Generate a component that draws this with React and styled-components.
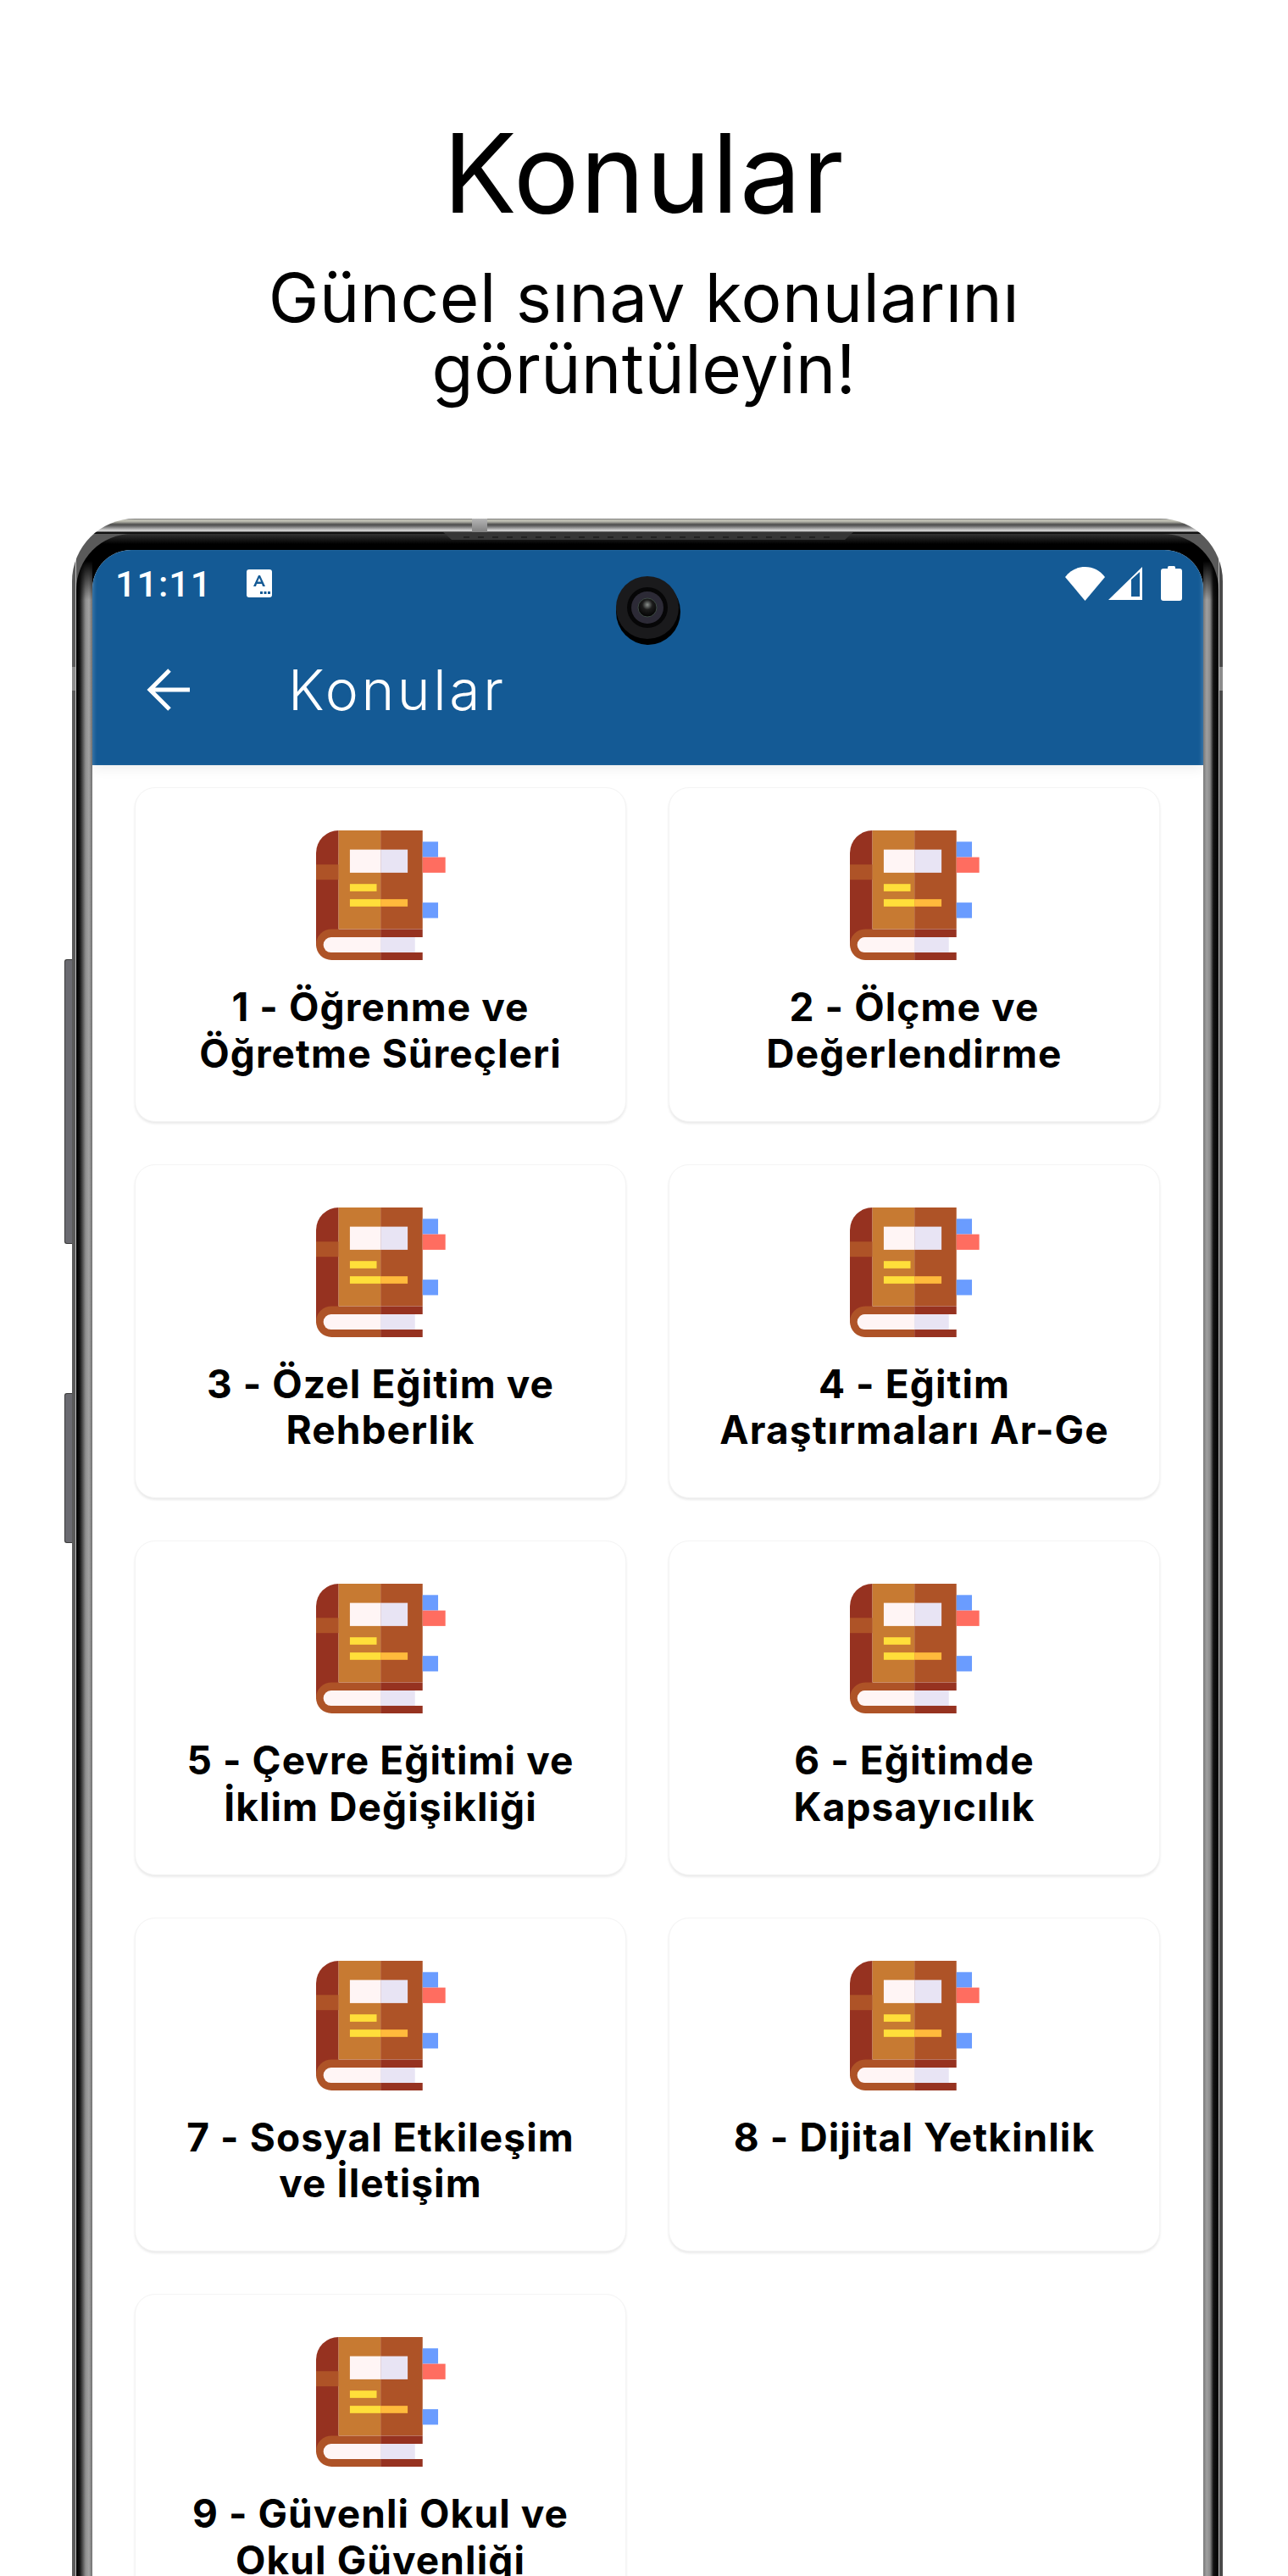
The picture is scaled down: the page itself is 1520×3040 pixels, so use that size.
import React from 'react';
import styled, { createGlobalStyle } from 'styled-components';

const sans = `Inter, "Noto Sans", "Liberation Sans", sans-serif`;

const GlobalStyle = createGlobalStyle`
    html, body { margin: 0; padding: 0; background: #fff; }
    #root { height: 3040px; overflow: hidden; }
`;

const Page = styled.div`
    height: 3040px;
    overflow: hidden;
    background: #fff;
    font-family: ${sans};
    color: #000;
`;

const Hero = styled.header`
    height: 612px;
    padding-top: 134px;
    box-sizing: border-box;
    text-align: center;
`;

const HeroTitle = styled.h1`
    margin: 0;
    font-size: 129px;
    line-height: 140px;
    font-weight: 400;
    letter-spacing: 1.5px;
`;

const HeroSub = styled.p`
    margin: 35px 0 0;
    font-size: 80px;
    line-height: 84px;
    font-weight: 400;
    letter-spacing: 0.5px;
`;

const Phone = styled.div`
    position: relative;
    width: 1358px;
    margin-left: 85px;
    box-sizing: border-box;
    padding: 18px 5px 0;
    border-radius: 74px 74px 0 0;
    background:
        linear-gradient(180deg, #777 0, #c9c9bb 2px, #a9a99f 4px, #4c4c4c 7px, #6a6a6a 9px, #d6d6d6 14px, #c4c4c4 15px, #111 16px, #111 18px) 0 0 / 100% 18px no-repeat,
        linear-gradient(90deg, #5a5a5a 0, #5a5a5a 3.5px, #c0c0c0 4px, #c0c0c0 5px, #5a5a5a 5px, #5a5a5a calc(100% - 5px), #c0c0c0 calc(100% - 5px), #c0c0c0 calc(100% - 4px), #4a4a4a calc(100% - 3.5px));
`;

const SideKey = styled.span`
    position: absolute;
    left: -9px;
    top: ${p => p.$top}px;
    width: 9px;
    height: ${p => p.$height}px;
    box-sizing: border-box;
    border: 1px solid #3a3a3a;
    border-right: 0;
    border-radius: 3px 0 0 3px;
    background: #6a6a70;
`;

const RimNotch = styled.span`
    position: absolute;
    ${p => p.$side}: 0;
    top: 175px;
    width: 4px;
    height: 28px;
    background: #8c8c8c;
`;

const TopKey = styled.span`
    position: absolute;
    left: 472px;
    top: 0;
    width: 18px;
    height: 17px;
    background: linear-gradient(180deg, #b5b5b5, #7d7d7d);
`;

const Speaker = styled.svg`
    position: absolute;
    left: 438px;
    top: 16px;
    display: block;
`;

const Bezel = styled.div`
    padding: 19px 18px 0 19px;
    border-radius: 66px 66px 0 0;
    background:
        linear-gradient(180deg, #333 0, #000 12px, #000 32px, rgba(0, 0, 0, 0) 78px) 0 0 / 100% 100% no-repeat,
        linear-gradient(90deg, #000 0, #111 4px, #8e8e8e 11px, #a2a2a2 15px, #6f6f6f 19px) 0 0 / 19px 100% no-repeat,
        linear-gradient(270deg, #000 0, #111 6px, #8a8a8a 10px, #a0a0a0 14px, #777 18px) 100% 0 / 18px 100% no-repeat,
        #000;
`;

const Screen = styled.div`
    position: relative;
    border-radius: 46px 46px 0 0;
    overflow: hidden;
    background: #fff;
`;

const AppHeader = styled.div`
    position: relative;
    z-index: 1;
    height: 254px;
    background: #145a95;
    color: #fff;
    box-shadow: 0 4px 14px rgba(0, 0, 0, 0.07), inset 4px 0 4px -2px rgba(255, 255, 255, 0.18), inset -4px 0 4px -2px rgba(255, 255, 255, 0.18);
`;

const StatusBar = styled.div`
    display: flex;
    align-items: center;
    height: 79px;
    padding: 0 25px 0 27px;
    box-sizing: border-box;
`;

const Clock = styled.span`
    font-family: Roboto, ${sans};
    font-size: 43px;
    font-weight: 500;
    letter-spacing: 1px;
    width: 155px;
`;

const StatusIcons = styled.div`
    display: flex;
    align-items: center;
    margin-left: auto;
`;

const Svg = styled.svg`
    display: block;
    flex: none;
    margin-left: ${p => p.$gap || 0}px;
`;

const TitleBar = styled.div`
    display: flex;
    align-items: center;
    height: 172px;
    padding-left: 64px;
`;

const BarTitle = styled.span`
    margin-left: 115px;
    font-size: 66px;
    font-weight: 300;
    letter-spacing: 3.6px;
`;

const Camera = styled.svg`
    position: absolute;
    z-index: 2;
    left: 614px;
    top: 29px;
`;

const TopicGrid = styled.div`
    display: grid;
    grid-template-columns: 580px 580px;
    grid-auto-rows: 394.5px;
    gap: 50px;
    padding: 26px 50px 0;
`;

const TopicCard = styled.div`
    box-sizing: border-box;
    padding-top: 50px;
    border-radius: 24px;
    background: #fff;
    border: 1px solid #f4f4f4;
    box-shadow: 0 2px 3px rgba(0, 0, 0, 0.09);
    text-align: center;
`;

const BookIcon = styled.svg`
    display: block;
    width: 153px;
    height: 153px;
    margin: 0 auto;
`;

const TopicName = styled.div`
    margin-top: 28px;
    font-size: 46px;
    line-height: 54.5px;
    font-weight: 700;
    letter-spacing: 1.1px;
    color: #000;
`;

const Book = () => (
    <BookIcon viewBox="97 60 460 460">
        <path d="M177 60H177A80 80 0 0 0 97 140V470L177 430Z" fill="#963220" />
        <rect x="97" y="181" width="80" height="54" fill="#ae5327" />
        <rect x="177" y="60" width="149" height="350" fill="#c77a32" />
        <rect x="326" y="60" width="149" height="350" fill="#ae5327" />
        <rect x="217" y="128" width="109" height="82" fill="#fff5f5" />
        <rect x="326" y="128" width="96" height="82" fill="#e8e4f4" />
        <rect x="217" y="250" width="95" height="26" fill="#ffdf3a" />
        <rect x="217" y="304" width="109" height="26" fill="#ffdf3a" />
        <rect x="326" y="304" width="96" height="26" fill="#ffba3c" />
        <rect x="475" y="100" width="55" height="55" fill="#6a9cff" />
        <rect x="475" y="155" width="81" height="55" fill="#ff6d60" />
        <rect x="475" y="316" width="55" height="55" fill="#6a9cff" />
        <path d="M326 410H152A55 55 0 0 0 97 465A55 55 0 0 0 152 520H326Z" fill="#ae5327" />
        <path d="M326 410H475V439H326ZM326 493H475V520H326Z" fill="#963220" />
        <path d="M326 439H150A27 27 0 0 0 150 493H326Z" fill="#fff5f5" />
        <rect x="326" y="439" width="122" height="54" fill="#e8e4f4" />
    </BookIcon>
);

const TOPICS = [
    ['1 - Öğrenme ve', 'Öğretme Süreçleri'],
    ['2 - Ölçme ve', 'Değerlendirme'],
    ['3 - Özel Eğitim ve', 'Rehberlik'],
    ['4 - Eğitim', 'Araştırmaları Ar-Ge'],
    ['5 - Çevre Eğitimi ve', 'İklim Değişikliği'],
    ['6 - Eğitimde', 'Kapsayıcılık'],
    ['7 - Sosyal Etkileşim', 've İletişim'],
    ['8 - Dijital Yetkinlik'],
    ['9 - Güvenli Okul ve', 'Okul Güvenliği'],
];

export default function App() {
    return (
        <Page>
            <GlobalStyle />
            <Hero>
                <HeroTitle>Konular</HeroTitle>
                <HeroSub>Güncel sınav konularını<br />görüntüleyin!</HeroSub>
            </Hero>
            <Phone>
                <SideKey $top={520} $height={336} />
                <SideKey $top={1032} $height={177} />
                <RimNotch $side="left" />
                <RimNotch $side="right" />
                <TopKey />
                <Speaker width="484" height="10" viewBox="0 0 484 10">
                    <path d="M0 0H484L474 9H10Z" fill="#363636" />
                    <path d="M24 6H460" stroke="#1c1c1c" strokeWidth="1.5" strokeDasharray="7 10" />
                </Speaker>
                <Bezel>
                    <Screen>
                        <Camera width="84" height="90" viewBox="0 0 84 90">
                            <defs>
                                <radialGradient id="lens" cx="50%" cy="35%" r="60%">
                                    <stop offset="0" stopColor="#8a8f8c" />
                                    <stop offset="0.45" stopColor="#1c1c1c" />
                                    <stop offset="1" stopColor="#050505" />
                                </radialGradient>
                            </defs>
                            <ellipse cx="42" cy="44" rx="38" ry="39" fill="#000" />
                            <circle cx="41" cy="39" r="37" fill="#1a1a1c" />
                            <circle cx="41" cy="39" r="24" fill="#060607" />
                            <circle cx="41" cy="39" r="19" fill="#2c2a36" />
                            <circle cx="41" cy="39" r="11" fill="url(#lens)" stroke="#3d4a44" strokeWidth="1" />
                        </Camera>
                        <AppHeader>
                            <StatusBar>
                                <Clock>11:11</Clock>
                                <Svg width="30" height="33" viewBox="0 0 30 33">
                                    <rect width="30" height="33" rx="3" fill="#fff" />
                                    <path d="M8 20L14 7H16L22 20H19L18 17H12L11 20ZM13 14.500H17L15 10Z" fill="#145a95" />
                                    <path d="M16 26h3v3h-3zM20.500 26h3v3h-3zM25 26h3v3h-3z" fill="#145a95" />
                                </Svg>
                                <StatusIcons>
                                    <Svg width="47" height="40" viewBox="0 0 47 40">
                                        <path d="M0 12C6 4 14 0 23.500 0S41 4 47 12L23.500 40Z" fill="#fff" />
                                    </Svg>
                                    <Svg $gap={4} width="40" height="39" viewBox="0 0 40 39">
                                        <path fillRule="evenodd" d="M40 0V39H0ZM27 15V35H37V6Z" fill="#fff" />
                                    </Svg>
                                    <Svg $gap={22} width="25" height="41" viewBox="0 0 25 41">
                                        <path d="M8 3V1.500Q8 0 9.500 0H15.500Q17 0 17 1.500V3H22Q25 3 25 6V38Q25 41 22 41H3Q0 41 0 38V6Q0 3 3 3Z" fill="#fff" />
                                    </Svg>
                                </StatusIcons>
                            </StatusBar>
                            <TitleBar>
                                <Svg width="52" height="52" viewBox="0 0 52 52">
                                    <path d="M51 26H4M27 3L4 26L27 49" fill="none" stroke="#fff" strokeWidth="5" />
                                </Svg>
                                <BarTitle>Konular</BarTitle>
                            </TitleBar>
                        </AppHeader>
                        <TopicGrid>
                            {TOPICS.map(lines => (
                                <TopicCard key={lines[0]}>
                                    <Book />
                                    <TopicName>
                                        {lines.map(line => <div key={line}>{line}</div>)}
                                    </TopicName>
                                </TopicCard>
                            ))}
                        </TopicGrid>
                    </Screen>
                </Bezel>
            </Phone>
        </Page>
    );
}
